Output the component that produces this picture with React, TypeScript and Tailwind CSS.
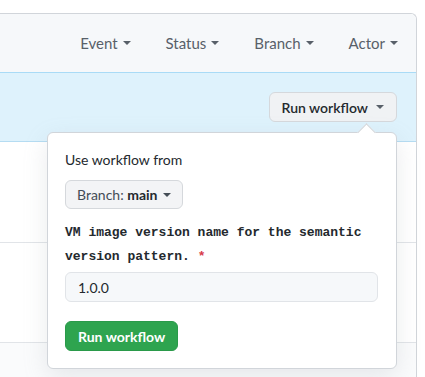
function Caret({ className = '' }: { className?: string }) {
  return (
    <span
      className={`inline-block w-0 h-0 border-x-[4px] border-t-[4px] border-x-transparent border-t-current ${className}`}
    />
  );
}

const filters = ['Event', 'Status', 'Branch', 'Actor'];

export default function App() {
  return (
    <div
      className="min-h-screen bg-white pt-[13px] pr-[8px] overflow-hidden text-[#24292e]"
      style={{ fontFamily: 'Lato, "Liberation Sans", sans-serif' }}
    >
      <div className="border-t border-r border-[#d1d5da] rounded-tr-[6px]">
        {/* filter header */}
        <div className="h-[59px] bg-[#f6f8fa] rounded-tr-[6px] border-b border-[#a9dbf6] flex items-center justify-end gap-[35px] pr-[18px] text-[15px] text-[#586069]">
          {filters.map((f) => (
            <div key={f} className="flex items-center gap-[5px]">
              <span>{f}</span>
              <Caret />
            </div>
          ))}
        </div>

        {/* blue banner with run workflow */}
        <div className="h-[69px] bg-[#def2fc] border-b border-[#b5dcf2] flex justify-end items-start pt-[19px] pr-[19px]">
          <div className="relative">
            <button className="h-[30px] pl-[12px] pr-[12px] flex items-center gap-[8px] rounded-[6px] border border-[#d5d8dc] bg-[#f0f2f4] text-[14px] font-semibold text-[#24292e]">
              <span>Run workflow</span>
              <Caret className="text-[#586069]" />
            </button>

            {/* popover */}
            <div className="absolute right-0 top-[40px] w-[350px] z-10 bg-white border border-[#d1d5da] rounded-[6px] shadow-[0_8px_24px_rgba(149,157,165,0.2)] pl-[17px] pr-[18px] pt-[17px] pb-[17px]">
              <div className="absolute -top-[7px] right-[23px] w-[13px] h-[13px] bg-white border-l border-t border-[#d1d5da] rotate-45" />
              <div className="text-[14px] leading-[20px]">Use workflow from</div>
              <button className="mt-[10px] h-[29px] px-[11px] flex items-center gap-[5px] rounded-[6px] border border-[#d5d8dc] bg-[#f3f4f6] text-[14px]">
                <span className="text-[#444d56]">
                  Branch: <span className="font-bold text-[#24292e]">main</span>
                </span>
                <Caret className="text-[#444d56]" />
              </button>
              <div
                className="mt-[12px] text-[13px] leading-[24px] font-bold text-[#24292e]"
                style={{ fontFamily: '"Liberation Mono", "DejaVu Sans Mono", monospace' }}
              >
                VM image version name for the semantic version pattern.{' '}
                <span className="text-[#d73a49]">*</span>
              </div>
              <div className="mt-[3px] h-[30px] rounded-[6px] border border-[#e1e4e8] bg-[#f6f8fa] flex items-center px-[12px] text-[14px] text-[#24292e]">
                1.0.0
              </div>
              <button className="mt-[19px] h-[30px] px-[12px] rounded-[6px] bg-[#2ea44f] border border-[#2a9a4a] text-white text-[14px] font-bold">
                Run workflow
              </button>
            </div>
          </div>
        </div>

        {/* workflow rows behind popover */}
        <div className="h-[101px] bg-white border-b border-[#e1e4e8]" />
        <div className="h-[100px] bg-white border-b border-[#e1e4e8]" />
        <div className="h-[34px] bg-[#fafbfc]" />
      </div>
    </div>
  );
}
